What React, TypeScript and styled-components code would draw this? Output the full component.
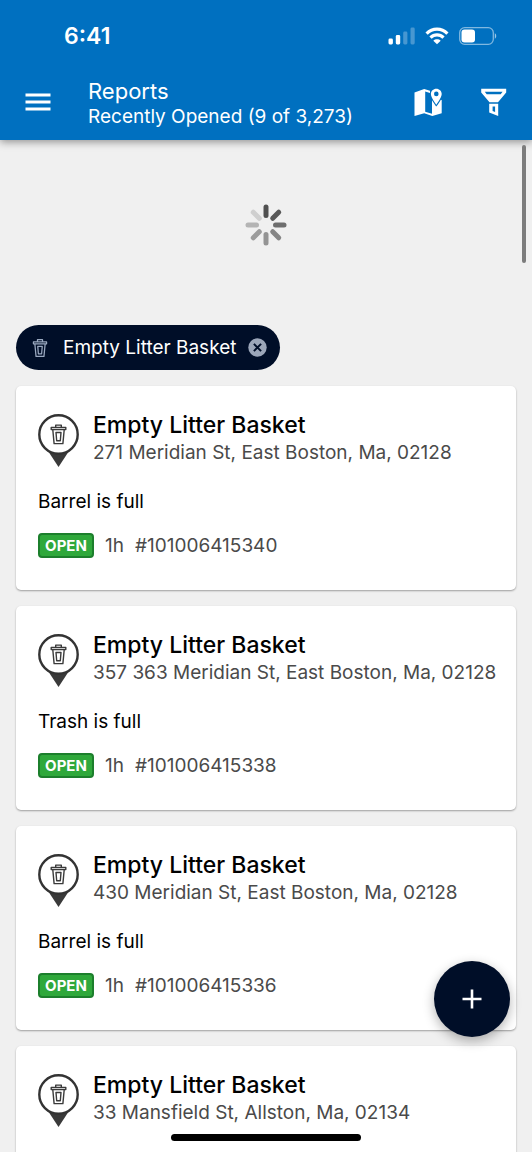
import React from "react";
import styled, { createGlobalStyle } from "styled-components";

const GlobalStyle = createGlobalStyle`
  *, *::before, *::after { box-sizing: border-box; }
  body {
    margin: 0;
    background: #f0f0f0;
    color: #000;
    font-family: Inter, "Liberation Sans", sans-serif;
    -webkit-font-smoothing: antialiased;
  }
  button { font: inherit; border: 0; padding: 0; background: none; color: inherit; cursor: pointer; }
  h1, h2, p, ul { margin: 0; padding: 0; }
  svg { display: block; flex: none; }
`;

const Screen = styled.div`
  position: relative;
  display: flex;
  flex-direction: column;
  height: 100vh;
  overflow: hidden;
`;

const Header = styled.header`
  flex: none;
  position: relative;
  z-index: 1;
  background: #0070c0;
  color: #fff;
  box-shadow: 0 2px 8px rgba(0, 0, 0, 0.4);
`;

const StatusBar = styled.div`
  display: flex;
  align-items: center;
  justify-content: space-between;
  height: 72px;
  padding: 0 35px 0 64px;
`;

const Clock = styled.time`
  font-size: 23px;
  line-height: 28px;
  font-weight: 600;
`;

const StatusIcons = styled.div`
  display: flex;
  align-items: center;
  gap: 10px;
`;

const Toolbar = styled.div`
  display: flex;
  align-items: center;
  height: 68px;
  padding: 0 24px 8px;
`;

const ToolButton = styled.button`
  display: grid;
  place-items: center;
  width: 28px;
  height: 28px;
`;

const Heading = styled.div`
  flex: 1;
  min-width: 0;
  margin: 4px 16px 0 36px;
`;

const Title = styled.h1`
  font-size: 22px;
  line-height: 26px;
  font-weight: 400;
`;

const Subtitle = styled.p`
  font-size: 19px;
  line-height: 26px;
`;

const Actions = styled.div`
  display: flex;
  gap: 38px;
`;

const Content = styled.main`
  flex: 1;
  min-height: 0;
  overflow-y: auto;
  padding: 0 16px 16px;
  scrollbar-width: none;
`;

const Loading = styled.div`
  display: flex;
  justify-content: center;
  height: 185px;
  padding-top: 64px;
`;

const Chip = styled.div`
  display: inline-flex;
  align-items: center;
  height: 45px;
  margin-bottom: 16px;
  padding: 0 13px 0 16px;
  border-radius: 23px;
  background: #000e28;
  color: #fff;
  font-size: 19px;
  line-height: 24px;
  vertical-align: top;
`;

const ChipLabel = styled.span`
  margin: 0 12px 0 15px;
`;

const List = styled.ul`
  display: grid;
  gap: 16px;
  list-style: none;
`;

const Card = styled.li`
  padding: 25px 16px 32px 22px;
  border-radius: 5px;
  background: #fff;
  box-shadow: 0 1px 2px rgba(0, 0, 0, 0.35);
`;

const CardTop = styled.div`
  display: flex;
  align-items: flex-end;
  gap: 13px;
`;

const CardTitle = styled.h2`
  font-size: 23px;
  line-height: 28px;
  font-weight: 500;
`;

const Address = styled.p`
  color: #4a4a4a;
  font-size: 19px;
  line-height: 28px;
`;

const Description = styled.p`
  margin: 23px 0 19px;
  font-size: 19px;
  line-height: 24px;
`;

const Meta = styled.div`
  display: flex;
  align-items: center;
  gap: 11px;
  color: #4a4a4a;
  font-size: 19px;
  line-height: 24px;
`;

const Badge = styled.span`
  width: 56px;
  height: 25px;
  border: 2px solid #1c7f2c;
  border-radius: 4px;
  background: #2fa83b;
  color: #fff;
  font-size: 15px;
  line-height: 21px;
  font-weight: 700;
  text-align: center;
`;

const AddButton = styled.button`
  position: absolute;
  z-index: 2;
  right: 22px;
  bottom: 115px;
  display: grid;
  place-items: center;
  width: 76px;
  height: 76px;
  border-radius: 50%;
  && { background: #000e28; }
  box-shadow: 0 4px 12px rgba(0, 0, 0, 0.3);
`;

const ScrollThumb = styled.div`
  position: absolute;
  z-index: 2;
  top: 145px;
  right: 6px;
  width: 4px;
  height: 118px;
  border-radius: 2px;
  background: #7c7c7c;
`;

const HomeIndicator = styled.div`
  position: absolute;
  z-index: 2;
  left: 50%;
  bottom: 11px;
  width: 190px;
  height: 7px;
  border-radius: 4px;
  background: #000;
  transform: translateX(-50%);
`;

const SignalIcon = () => (
  <svg width="27" height="18" viewBox="0 0 27 18" fill="#fff" aria-hidden="true">
    <rect x="0.5" y="11.5" width="4.4" height="6" rx="1.4" />
    <rect x="7.8" y="8" width="4.4" height="9.5" rx="1.4" />
    <rect x="15.2" y="4.5" width="4.2" height="13" rx="1.4" opacity=".28" />
    <rect x="22.5" y="0.5" width="4.2" height="17" rx="1.4" opacity=".28" />
  </svg>
);

const WifiIcon = () => (
  <svg width="24" height="18" viewBox="0 0 24 18" fill="none" stroke="#fff" strokeWidth="3.2" aria-hidden="true">
    <path d="M1.6 6.6C7.4.7 16.6.7 22.4 6.6" />
    <path d="M5.5 10.7c3.7-3.7 9.3-3.7 13 0" />
    <path d="M12 17.3 8.3 13.7c2.1-1.9 5.3-1.9 7.4 0Z" fill="#fff" stroke="none" />
  </svg>
);

const BatteryIcon = () => (
  <svg width="38" height="18" viewBox="0 0 38 18" aria-hidden="true">
    <rect x=".7" y=".7" width="33.6" height="16.6" rx="5" fill="none" stroke="#fff" strokeOpacity=".5" strokeWidth="1.3" />
    <rect x="2.5" y="2.5" width="13.5" height="13" rx="3" fill="#fff" />
    <path d="M35.8 6.3c1.9.8 1.9 4.6 0 5.4Z" fill="#fff" fillOpacity=".6" />
  </svg>
);

const MenuIcon = () => (
  <svg width="26" height="18" viewBox="0 0 26 18" fill="#fff" aria-hidden="true">
    <path d="M.5.5h25v3H.5ZM.5 7.5h25v3H.5ZM.5 14.5h25v3H.5Z" />
  </svg>
);

const MapIcon = () => (
  <svg width="28" height="28" viewBox="0 0 28 28" aria-hidden="true">
    <path d="M.5 4.5 10.2.9l5.8 1.8V5l-4.800-1.400v20.200l6.800 2V9l9.700 3v13.300L18.300 28 10.200 25.200.5 28Z" fill="#fff" />
    <path d="M22.3.3c-3.6 0-6.3 2.7-6.3 6.2 0 4.2 6.3 12 6.3 12s6.3-7.8 6.3-12c0-3.500-2.700-6.200-6.300-6.200Z" fill="#0070c0" />
    <path d="M22.3.7c-3 0-5.4 2.300-5.400 5.300 0 3.700 5.400 10.700 5.400 10.700s5.400-7 5.400-10.700c0-3-2.400-5.300-5.400-5.300Zm0 7.500a2.300 2.300 0 1 1 0-4.600 2.300 2.300 0 0 1 0 4.600Z" fill="#fff" />
  </svg>
);

const FilterIcon = () => (
  <svg width="28" height="28" viewBox="0 0 28 28" fill="#fff" fillRule="evenodd" aria-hidden="true">
    <path d="M1.200.8h25v3.800L18 14.300H9.500L1.200 4.600ZM4.800 3.800l1.900 2.400h14l1.900-2.400Z" />
    <path d="M9.2 15.8h9v12.200l-9-3.500ZM12.600 18.500v4.500l2.500 1v-5.500Z" />
  </svg>
);

const SPOKES = ["#505050", "#585858", "#6e6e6e", "#858585", "#949494", "#9c9c9c", "#b4b4b4", "#cfcfcf"];

const Spinner = () => (
  <svg width="42" height="42" viewBox="-21 -21 42 42" role="img" aria-label="Loading">
    {SPOKES.map((color, i) => (
      <rect key={color} x="-2.5" y="-20.5" width="5" height="13.5" rx="2.5" fill={color} transform={`rotate(${i * 45})`} />
    ))}
  </svg>
);

const TrashShape = () => (
  <g fill="none" strokeWidth="1.4" strokeLinejoin="round">
    <path d="M.7 3.2h14.6v2.1H.7ZM5.2 3V.8h5.6V3" />
    <path d="M2.3 5.5 3.6 19.3h8.8L13.7 5.5" />
    <path d="M5.5 8.2h5l-.7 8.2H6.2Z" />
  </g>
);

const ChipTrashIcon = () => (
  <svg width="16" height="18" viewBox="0 0 16 20" stroke="#9aa9c0" aria-hidden="true">
    <TrashShape />
  </svg>
);

const CloseIcon = () => (
  <svg width="19" height="19" viewBox="0 0 19 19" aria-hidden="true">
    <circle cx="9.5" cy="9.5" r="9.2" fill="#9ba6b9" />
    <path d="m5.9 5.9 7.2 7.2m0-7.2-7.2 7.2" stroke="#000e28" strokeWidth="2" />
  </svg>
);

const PinIcon = () => (
  <svg width="42" height="53" viewBox="0 0 42 53" aria-hidden="true">
    <path d="M10 37h21l-10.5 16Z" fill="#3a3a3a" />
    <circle cx="20.5" cy="20.5" r="19.2" fill="#fff" stroke="#333" strokeWidth="2.4" />
    <g transform="translate(12.5 10.3)" stroke="#3a3a3a">
      <TrashShape />
    </g>
  </svg>
);

const PlusIcon = () => (
  <svg width="20" height="20" viewBox="0 0 20 20" aria-hidden="true">
    <path d="M10 .5v19M.5 10h19" stroke="#fff" strokeWidth="2.6" />
  </svg>
);

const REPORTS = [
  { id: "#101006415340", address: "271 Meridian St, East Boston, Ma, 02128", text: "Barrel is full" },
  { id: "#101006415338", address: "357 363 Meridian St, East Boston, Ma, 02128", text: "Trash is full" },
  { id: "#101006415336", address: "430 Meridian St, East Boston, Ma, 02128", text: "Barrel is full" },
  { id: "", address: "33 Mansfield St, Allston, Ma, 02134", text: "" },
];

export default function App() {
  return (
    <Screen>
      <GlobalStyle />
      <Header>
        <StatusBar>
          <Clock>6:41</Clock>
          <StatusIcons>
            <SignalIcon />
            <WifiIcon />
            <BatteryIcon />
          </StatusIcons>
        </StatusBar>
        <Toolbar>
          <ToolButton aria-label="Menu"><MenuIcon /></ToolButton>
          <Heading>
            <Title>Reports</Title>
            <Subtitle>Recently Opened (9 of 3,273)</Subtitle>
          </Heading>
          <Actions>
            <ToolButton aria-label="Map"><MapIcon /></ToolButton>
            <ToolButton aria-label="Filter"><FilterIcon /></ToolButton>
          </Actions>
        </Toolbar>
      </Header>
      <Content>
        <Loading><Spinner /></Loading>
        <Chip>
          <ChipTrashIcon />
          <ChipLabel>Empty Litter Basket</ChipLabel>
          <button aria-label="Remove filter"><CloseIcon /></button>
        </Chip>
        <List>
          {REPORTS.map((report) => (
            <Card key={report.address}>
              <CardTop>
                <PinIcon />
                <div>
                  <CardTitle>Empty Litter Basket</CardTitle>
                  <Address>{report.address}</Address>
                </div>
              </CardTop>
              {report.text && <Description>{report.text}</Description>}
              {report.id && (
                <Meta>
                  <Badge>OPEN</Badge>
                  <span>1h</span>
                  <span>{report.id}</span>
                </Meta>
              )}
            </Card>
          ))}
        </List>
      </Content>
      <ScrollThumb />
      <AddButton aria-label="Add report"><PlusIcon /></AddButton>
      <HomeIndicator />
    </Screen>
  );
}
